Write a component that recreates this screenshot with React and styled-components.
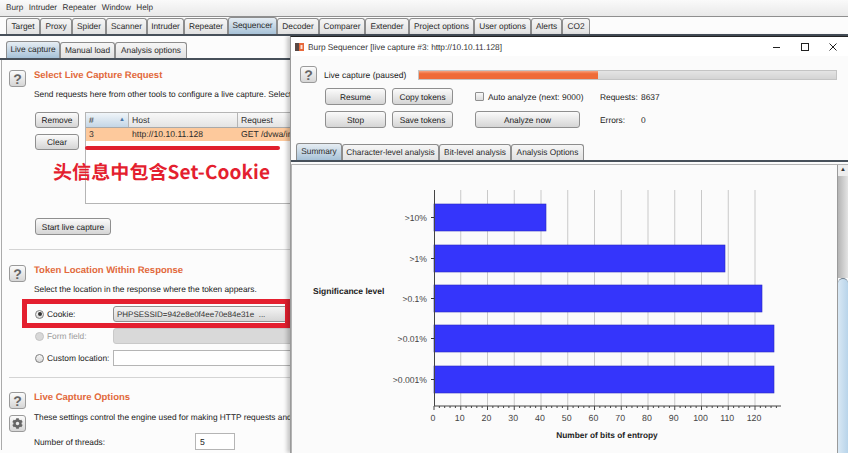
import styled, { createGlobalStyle } from 'styled-components';
import { FaCog } from 'react-icons/fa';

const GlobalStyle = createGlobalStyle`
  html, body {
    margin: 0;
    padding: 0;
    background: #fcfcfc;
  }
  * {
    box-sizing: border-box;
  }
`;

const topTabs = [
  ['Target', 34], ['Proxy', 32], ['Spider', 34], ['Scanner', 41], ['Intruder', 37], ['Repeater', 44],
  ['Sequencer', 49], ['Decoder', 42], ['Comparer', 46], ['Extender', 44], ['Project options', 65],
  ['User options', 57], ['Alerts', 31], ['CO2', 28],
];
const captureTabs = [['Live capture', 54], ['Manual load', 55], ['Analysis options', 72]];
const resultTabs = [['Summary', 46], ['Character-level analysis', 97], ['Bit-level analysis', 72], ['Analysis Options', 73]];

const bars = [
  { label: '>10%', y: 204, end: 546 },
  { label: '>1%', y: 245, end: 725 },
  { label: '>0.1%', y: 285, end: 762 },
  { label: '>0.01%', y: 325, end: 774 },
  { label: '>0.001%', y: 366, end: 774 },
];

const xFor = (value) => 434 + value * 2.675;

const Chart = () => {
  const majors = Array.from({ length: 13 }, (_, i) => i * 10);
  const minors = Array.from({ length: 65 }, (_, i) => i * 2);
  return (
    <ChartSvg viewBox="292 165 544 288" width="544" height="288">
      {majors.slice(1).map((v) => (
        <line key={v} x1={xFor(v)} x2={xFor(v)} y1="190" y2="406" stroke="#c9c9c9" />
      ))}
      {bars.map((bar) => (
        <g key={bar.label}>
          <rect x="434" y={bar.y} width={bar.end - 434} height="27" fill="#3535fb" stroke="#2a2ac0" strokeWidth="0.6" />
          <line x1="431" x2="434" y1={bar.y + 13.5} y2={bar.y + 13.5} stroke="#333" />
          <text x="427" y={bar.y + 16.5} textAnchor="end" fontSize="8.6" fill="#444">{bar.label}</text>
        </g>
      ))}
      <line x1="434.5" x2="434.5" y1="190" y2="406" stroke="#444" />
      <line x1="434" x2="781" y1="406" y2="406" stroke="#444" />
      {minors.map((v) => (
        <line key={v} x1={xFor(v)} x2={xFor(v)} y1="406" y2={v % 10 === 0 ? 410 : 408} stroke="#444" />
      ))}
      {majors.map((v) => (
        <text key={v} x={xFor(v) - 1} y="420.5" textAnchor="middle" fontSize="8.8" fill="#444">{v}</text>
      ))}
      <text x="313" y="294" fontSize="8.5" fontWeight="700" fill="#222">Significance level</text>
      <text x="607" y="438" textAnchor="middle" fontSize="8.3" fontWeight="700" fill="#222">Number of bits of entropy</text>
    </ChartSvg>
  );
};

const App = () => {
  return (
    <Page>
      <GlobalStyle />
      <MenuBar>
        {['Burp', 'Intruder', 'Repeater', 'Window', 'Help'].map((item) => (
          <span key={item}>{item}</span>
        ))}
      </MenuBar>

      <TabStrip $height={19} $left={6}>
        {topTabs.map(([name, width]) => (
          <Tab key={name} $width={width} $active={name === 'Sequencer'}>{name}</Tab>
        ))}
      </TabStrip>
      <TabStrip $height={24} $left={6}>
        {captureTabs.map(([name, width]) => (
          <Tab key={name} $width={width} $active={name === 'Live capture'}>{name}</Tab>
        ))}
      </TabStrip>

      <LeftPanel>
        <Section $top={9} $bottom={14}>
          <HelpColumn><HelpButton>?</HelpButton></HelpColumn>
          <SectionBody>
            <Heading>Select Live Capture Request</Heading>
            <Description>Send requests here from other tools to configure a live capture. Select</Description>
            <RequestArea>
              <SideButtons>
                <Button $width={44} $height={16}>Remove</Button>
                <Button $width={44} $height={16}>Clear</Button>
              </SideButtons>
              <RequestTable>
                <TableHead>
                  <HeadCell $width={43} $sorted># <SortMark>▲</SortMark></HeadCell>
                  <HeadCell $width={109}>Host</HeadCell>
                  <HeadCell $width={300}>Request</HeadCell>
                </TableHead>
                <TableRow>
                  <RowCell $width={43}>3</RowCell>
                  <RowCell $width={109}>http://10.10.11.128</RowCell>
                  <RowCell $width={300}>GET /dvwa/in</RowCell>
                </TableRow>
              </RequestTable>
            </RequestArea>
            <StartRow>
              <Button $width={76} $height={17}>Start live capture</Button>
            </StartRow>
          </SectionBody>
        </Section>

        <Section $top={14} $bottom={11}>
          <HelpColumn><HelpButton>?</HelpButton></HelpColumn>
          <SectionBody>
            <Heading>Token Location Within Response</Heading>
            <Description>Select the location in the response where the token appears.</Description>
            <LocationList>
              <LocationRow>
                <Radio $checked />
                <LocationLabel>Cookie:</LocationLabel>
                <Dropdown>PHPSESSID=942e8e0f4ee70e84e31e&nbsp;&nbsp;...</Dropdown>
              </LocationRow>
              <LocationRow>
                <Radio $disabled />
                <LocationLabel $disabled>Form field:</LocationLabel>
                <Dropdown $disabled />
              </LocationRow>
              <LocationRow>
                <Radio />
                <LocationLabel>Custom location:</LocationLabel>
                <TextField />
              </LocationRow>
            </LocationList>
          </SectionBody>
        </Section>

        <Section $top={13} $bottom={0} $last>
          <HelpColumn $gap={6}>
            <HelpButton>?</HelpButton>
            <HelpButton><FaCog size={11} color="#666" /></HelpButton>
          </HelpColumn>
          <SectionBody>
            <Heading>Live Capture Options</Heading>
            <Description $gap={6}>These settings control the engine used for making HTTP requests and</Description>
            <ThreadsRow>
              <ThreadsLabel>Number of threads:</ThreadsLabel>
              <ThreadsInput>5</ThreadsInput>
            </ThreadsRow>
          </SectionBody>
        </Section>
      </LeftPanel>

      <RedLine />
      <RedNote>头信息中包含Set-Cookie</RedNote>
      <RedBox />

      <Window>
        <TitleBar>
          <TitleLogo viewBox="0 0 9 8" width="9" height="8">
            <rect width="4" height="8" fill="#5a4a46" />
            <rect x="4" width="5" height="8" fill="#e8683a" />
            <rect x="5.5" y="2" width="2" height="4" fill="#fff" opacity="0.8" />
          </TitleLogo>
          <TitleText>Burp Sequencer [live capture #3: http://10.10.11.128]</TitleText>
          <WindowControls>
            <svg width="8" height="8" viewBox="0 0 8 8"><path d="M0 4.5h7" stroke="#222" /></svg>
            <svg width="8" height="8" viewBox="0 0 8 8"><rect x="0.5" y="0.5" width="7" height="7" fill="none" stroke="#222" /></svg>
            <svg width="8" height="8" viewBox="0 0 8 8"><path d="M0.5 0.5l7 7M7.5 0.5l-7 7" stroke="#222" /></svg>
          </WindowControls>
        </TitleBar>

        <Controls>
          <StatusRow>
            <HelpButton>?</HelpButton>
            <StatusLabel>Live capture (paused)</StatusLabel>
            <Progress><ProgressFill style={{ width: `${(180 / 419) * 100}%` }} /></Progress>
          </StatusRow>
          <ActionRow>
            <ButtonGrid>
              <Button $width={61} $height={17}>Resume</Button>
              <Button $width={61} $height={17}>Copy tokens</Button>
              <Button $width={61} $height={17}>Stop</Button>
              <Button $width={61} $height={17}>Save tokens</Button>
            </ButtonGrid>
            <AnalyzeColumn>
              <AutoRow><Checkbox />Auto analyze (next: 9000)</AutoRow>
              <Button $width={105} $height={17}>Analyze now</Button>
            </AnalyzeColumn>
            <StatsColumn>
              <StatRow><StatName>Requests:</StatName>8637</StatRow>
              <StatRow><StatName>Errors:</StatName>0</StatRow>
            </StatsColumn>
          </ActionRow>
        </Controls>

        <ResultTabs>
          {resultTabs.map(([name, width]) => (
            <Tab key={name} $width={width} $active={name === 'Summary'}>{name}</Tab>
          ))}
        </ResultTabs>

        <ChartPane>
          <Chart />
          <ScrollBar>
            <ScrollButton>▲</ScrollButton>
            <ScrollTrack />
            <ScrollThumb />
          </ScrollBar>
        </ChartPane>
      </Window>
    </Page>
  );
};

const uiFont = `"Liberation Sans", Arial, sans-serif`;

const Page = styled.div`
  position: relative;
  width: 848px;
  height: 453px;
  overflow: hidden;
  background: #fcfcfc;
  color: #222;
  font-family: ${uiFont};
  font-size: 8.6px;
  line-height: 12px;
  text-rendering: geometricPrecision;
`;

const MenuBar = styled.div`
  display: flex;
  gap: 5.5px;
  height: 17px;
  padding-left: 6px;
  align-items: center;
  font-size: 8.2px;
  color: #333;
  background: linear-gradient(#fafafa, #e9e9e9);
  border-bottom: 1px solid #8f8f8f;
`;

const TabStrip = styled.div`
  display: flex;
  align-items: flex-end;
  height: ${(p) => p.$height}px;
  padding-left: ${(p) => p.$left}px;
  background: #fcfcfc;
  border-bottom: 2px solid #47505a;
`;

const Tab = styled.div`
  width: ${(p) => p.$width}px;
  height: ${(p) => (p.$active ? 17 : 16)}px;
  font-size: 8.3px;
  line-height: 15px;
  text-align: center;
  white-space: nowrap;
  color: #2a2a2a;
  border: 1px solid #8d8d8d;
  border-bottom: none;
  border-radius: 3px 3px 0 0;
  background: ${(p) => (p.$active
    ? 'linear-gradient(#e6edf3, #a7c2d8)'
    : 'linear-gradient(#f6f6f6, #e1e1e1)')};
`;

const LeftPanel = styled.div`
  margin-left: 1px;
  padding-left: 7px;
  border-left: 1px solid #ababab;
`;

const Section = styled.section`
  display: flex;
  gap: 8px;
  padding: ${(p) => p.$top}px 0 ${(p) => p.$bottom}px;
  border-bottom: ${(p) => (p.$last ? 'none' : '1px solid #d4d4d4')};
`;

const HelpColumn = styled.div`
  display: flex;
  flex-direction: column;
  gap: ${(p) => p.$gap || 0}px;
  margin-top: 1px;
`;

const HelpButton = styled.div`
  display: flex;
  align-items: center;
  justify-content: center;
  flex: none;
  width: 17px;
  height: 17px;
  font-size: 14px;
  font-weight: 700;
  color: #666;
  border: 1px solid #9a9a9a;
  border-radius: 3px;
  background: linear-gradient(#fbfbfb, #d6d6d6);
`;

const SectionBody = styled.div`
  flex: none;
  width: 800px;
`;

const Heading = styled.h2`
  margin: 0;
  font-size: 9.5px;
  line-height: 14px;
  font-weight: 700;
  color: #e2693b;
`;

const Description = styled.p`
  margin: ${(p) => p.$gap || 5}px 0 0;
  font-size: 8.3px;
  white-space: nowrap;
  color: #222;
`;

const RequestArea = styled.div`
  display: flex;
  gap: 6px;
  margin: 12px 0 0 1px;
`;

const SideButtons = styled.div`
  display: flex;
  flex-direction: column;
  gap: 6px;
`;

const Button = styled.div`
  display: flex;
  flex: none;
  align-items: center;
  justify-content: center;
  width: ${(p) => p.$width}px;
  height: ${(p) => p.$height}px;
  font-size: 8.3px;
  white-space: nowrap;
  color: #222;
  border: 1px solid #8f8f8f;
  border-radius: 3px;
  background: linear-gradient(#fbfbfb, #d5d5d5);
`;

const RequestTable = styled.div`
  width: 500px;
  height: 92px;
  border: 1px solid #b5b5b5;
  background: #fff;
`;

const TableHead = styled.div`
  display: flex;
  height: 15px;
  border-bottom: 1px solid #a9a9a9;
  background: linear-gradient(#f8f8f8, #e4e4e4);
`;

const HeadCell = styled.div`
  display: flex;
  justify-content: space-between;
  align-items: center;
  width: ${(p) => p.$width}px;
  padding: 0 3px;
  color: #333;
  border-right: 1px solid #b5b5b5;
  background: ${(p) => (p.$sorted ? 'linear-gradient(#f0f5f9, #c4d6e6)' : 'transparent')};
`;

const SortMark = styled.span`
  font-size: 6px;
  color: #4a76a8;
`;

const TableRow = styled.div`
  display: flex;
  height: 13px;
  background: #fdc99c;
`;

const RowCell = styled.div`
  width: ${(p) => p.$width}px;
  padding: 0 3px;
  white-space: nowrap;
  color: #2b2b2b;
`;

const StartRow = styled.div`
  margin: 14px 0 0 1px;
`;

const LocationList = styled.div`
  display: flex;
  flex-direction: column;
  gap: 6px;
  margin: 11px 0 0 1px;
`;

const LocationRow = styled.div`
  display: flex;
  align-items: center;
  height: 16px;
`;

const Radio = styled.div`
  position: relative;
  flex: none;
  width: 9px;
  height: 9px;
  margin-right: 3px;
  border: 1px solid ${(p) => (p.$disabled ? '#c4c4c4' : '#7f7f7f')};
  border-radius: 50%;
  background: ${(p) => (p.$disabled ? '#d8d8d8' : 'linear-gradient(#f8f8f8, #d8d8d8)')};

  &::after {
    content: '';
    display: ${(p) => (p.$checked ? 'block' : 'none')};
    position: absolute;
    inset: 1.5px;
    border-radius: 50%;
    background: #333;
  }
`;

const LocationLabel = styled.span`
  flex: none;
  width: 66px;
  font-size: 8.4px;
  white-space: nowrap;
  color: ${(p) => (p.$disabled ? '#9b9b9b' : '#222')};
`;

const Dropdown = styled.div`
  width: 300px;
  height: 16px;
  padding-left: 3px;
  font-size: 8px;
  line-height: 15px;
  white-space: nowrap;
  color: #333;
  border: 1px solid ${(p) => (p.$disabled ? '#c9c9c9' : '#8f8f8f')};
  border-radius: 3px;
  background: ${(p) => (p.$disabled ? '#d9d9d9' : 'linear-gradient(#f4f4f4, #d6d6d6)')};
`;

const TextField = styled.div`
  width: 300px;
  height: 16px;
  border: 1px solid #b5b5b5;
  background: #fff;
`;

const ThreadsRow = styled.div`
  display: flex;
  align-items: center;
  margin-top: 10px;
`;

const ThreadsLabel = styled.span`
  width: 161px;
  font-size: 8.3px;
`;

const ThreadsInput = styled.div`
  width: 40px;
  height: 17px;
  padding-left: 4px;
  line-height: 16px;
  border: 1px solid #b5b5b5;
  background: #fff;
`;

const RedLine = styled.div`
  position: absolute;
  left: 85px;
  top: 146px;
  width: 195px;
  height: 4px;
  border-radius: 2px;
  background: #e01f2d;
`;

const RedNote = styled.div`
  position: absolute;
  left: 53px;
  top: 160px;
  font-family: "Noto Sans CJK SC", ${uiFont};
  font-size: 19px;
  line-height: 24px;
  font-weight: 700;
  letter-spacing: 0.1px;
  white-space: nowrap;
  color: #e41f2f;
`;

const RedBox = styled.div`
  position: absolute;
  left: 22px;
  top: 299px;
  width: 268px;
  height: 29px;
  border: 5px solid #e41f2f;
`;

const Window = styled.div`
  position: absolute;
  left: 290px;
  top: 36px;
  display: flex;
  flex-direction: column;
  width: 558px;
  height: 417px;
  background: #fbfbfb;
  border-top: 1px solid #222;
  border-left: 1px solid #9a9a9a;
  box-shadow: -3px 0 4px rgba(0, 0, 0, 0.22);
`;

const TitleBar = styled.div`
  display: flex;
  align-items: center;
  height: 19px;
  padding: 0 11px 0 4px;
  background: #fff;
`;

const TitleLogo = styled.svg`
  flex: none;
  margin-right: 4px;
`;

const TitleText = styled.span`
  flex: 1;
  font-size: 8.3px;
  white-space: nowrap;
  color: #333;
`;

const WindowControls = styled.div`
  display: flex;
  gap: 20px;
`;

const Controls = styled.div`
  padding: 10px 0 0 9px;
`;

const StatusRow = styled.div`
  display: flex;
  align-items: center;
  height: 17px;
`;

const StatusLabel = styled.span`
  width: 101px;
  padding-left: 7px;
  font-size: 8.5px;
  white-space: nowrap;
`;

const Progress = styled.div`
  width: 419px;
  height: 10px;
  border: 1px solid #c4c4c4;
  background: linear-gradient(#e4e4e4, #d4d4d4);
`;

const ProgressFill = styled.div`
  height: 100%;
  background: linear-gradient(#f7a27e 0, #ef6b38 35%, #ef6b38 100%);
`;

const ActionRow = styled.div`
  display: flex;
  margin: 5px 0 0 25px;
`;

const ButtonGrid = styled.div`
  display: grid;
  grid-template-columns: 61px 61px;
  gap: 6px;
`;

const AnalyzeColumn = styled.div`
  display: flex;
  flex-direction: column;
  gap: 6px;
  width: 105px;
  margin-left: 22px;
`;

const AutoRow = styled.div`
  display: flex;
  align-items: center;
  height: 17px;
  font-size: 8.4px;
  white-space: nowrap;
`;

const Checkbox = styled.div`
  flex: none;
  width: 9px;
  height: 9px;
  margin-right: 4px;
  border: 1px solid #8f8f8f;
  border-radius: 1px;
  background: linear-gradient(#f8f8f8, #dcdcdc);
`;

const StatsColumn = styled.div`
  display: flex;
  flex-direction: column;
  gap: 6px;
  margin-left: 20px;
`;

const StatRow = styled.div`
  display: flex;
  align-items: center;
  height: 17px;
  font-size: 8.4px;
`;

const StatName = styled.span`
  width: 41px;
`;

const ResultTabs = styled.div`
  display: flex;
  align-items: flex-end;
  height: 18px;
  margin-top: 16px;
  padding-left: 5px;
  border-bottom: 2px solid #47505a;
`;

const ChartPane = styled.div`
  display: flex;
  flex: 1;
  min-height: 0;
  margin-top: 2px;
  border-top: 1px solid #b4b4b4;
  border-left: 1px solid #b4b4b4;
`;

const ChartSvg = styled.svg`
  display: block;
  flex: none;
  font-family: ${uiFont};
`;

const ScrollBar = styled.div`
  display: flex;
  flex-direction: column;
  flex: none;
  width: 11px;
  margin-left: 1px;
  border-left: 1px solid #9a9a9a;
`;

const ScrollButton = styled.div`
  height: 11px;
  font-size: 6px;
  line-height: 11px;
  text-align: center;
  color: #333;
  background: #eee;
`;

const ScrollTrack = styled.div`
  height: 102px;
  background: linear-gradient(90deg, #b4b4b4, #e4e4e4);
`;

const ScrollThumb = styled.div`
  flex: 1;
  border-radius: 5px 5px 0 0;
  border-top: 1px solid #6d7d8c;
  background: linear-gradient(90deg, #d9e8f4, #b8d4ea);
`;

export default App;
